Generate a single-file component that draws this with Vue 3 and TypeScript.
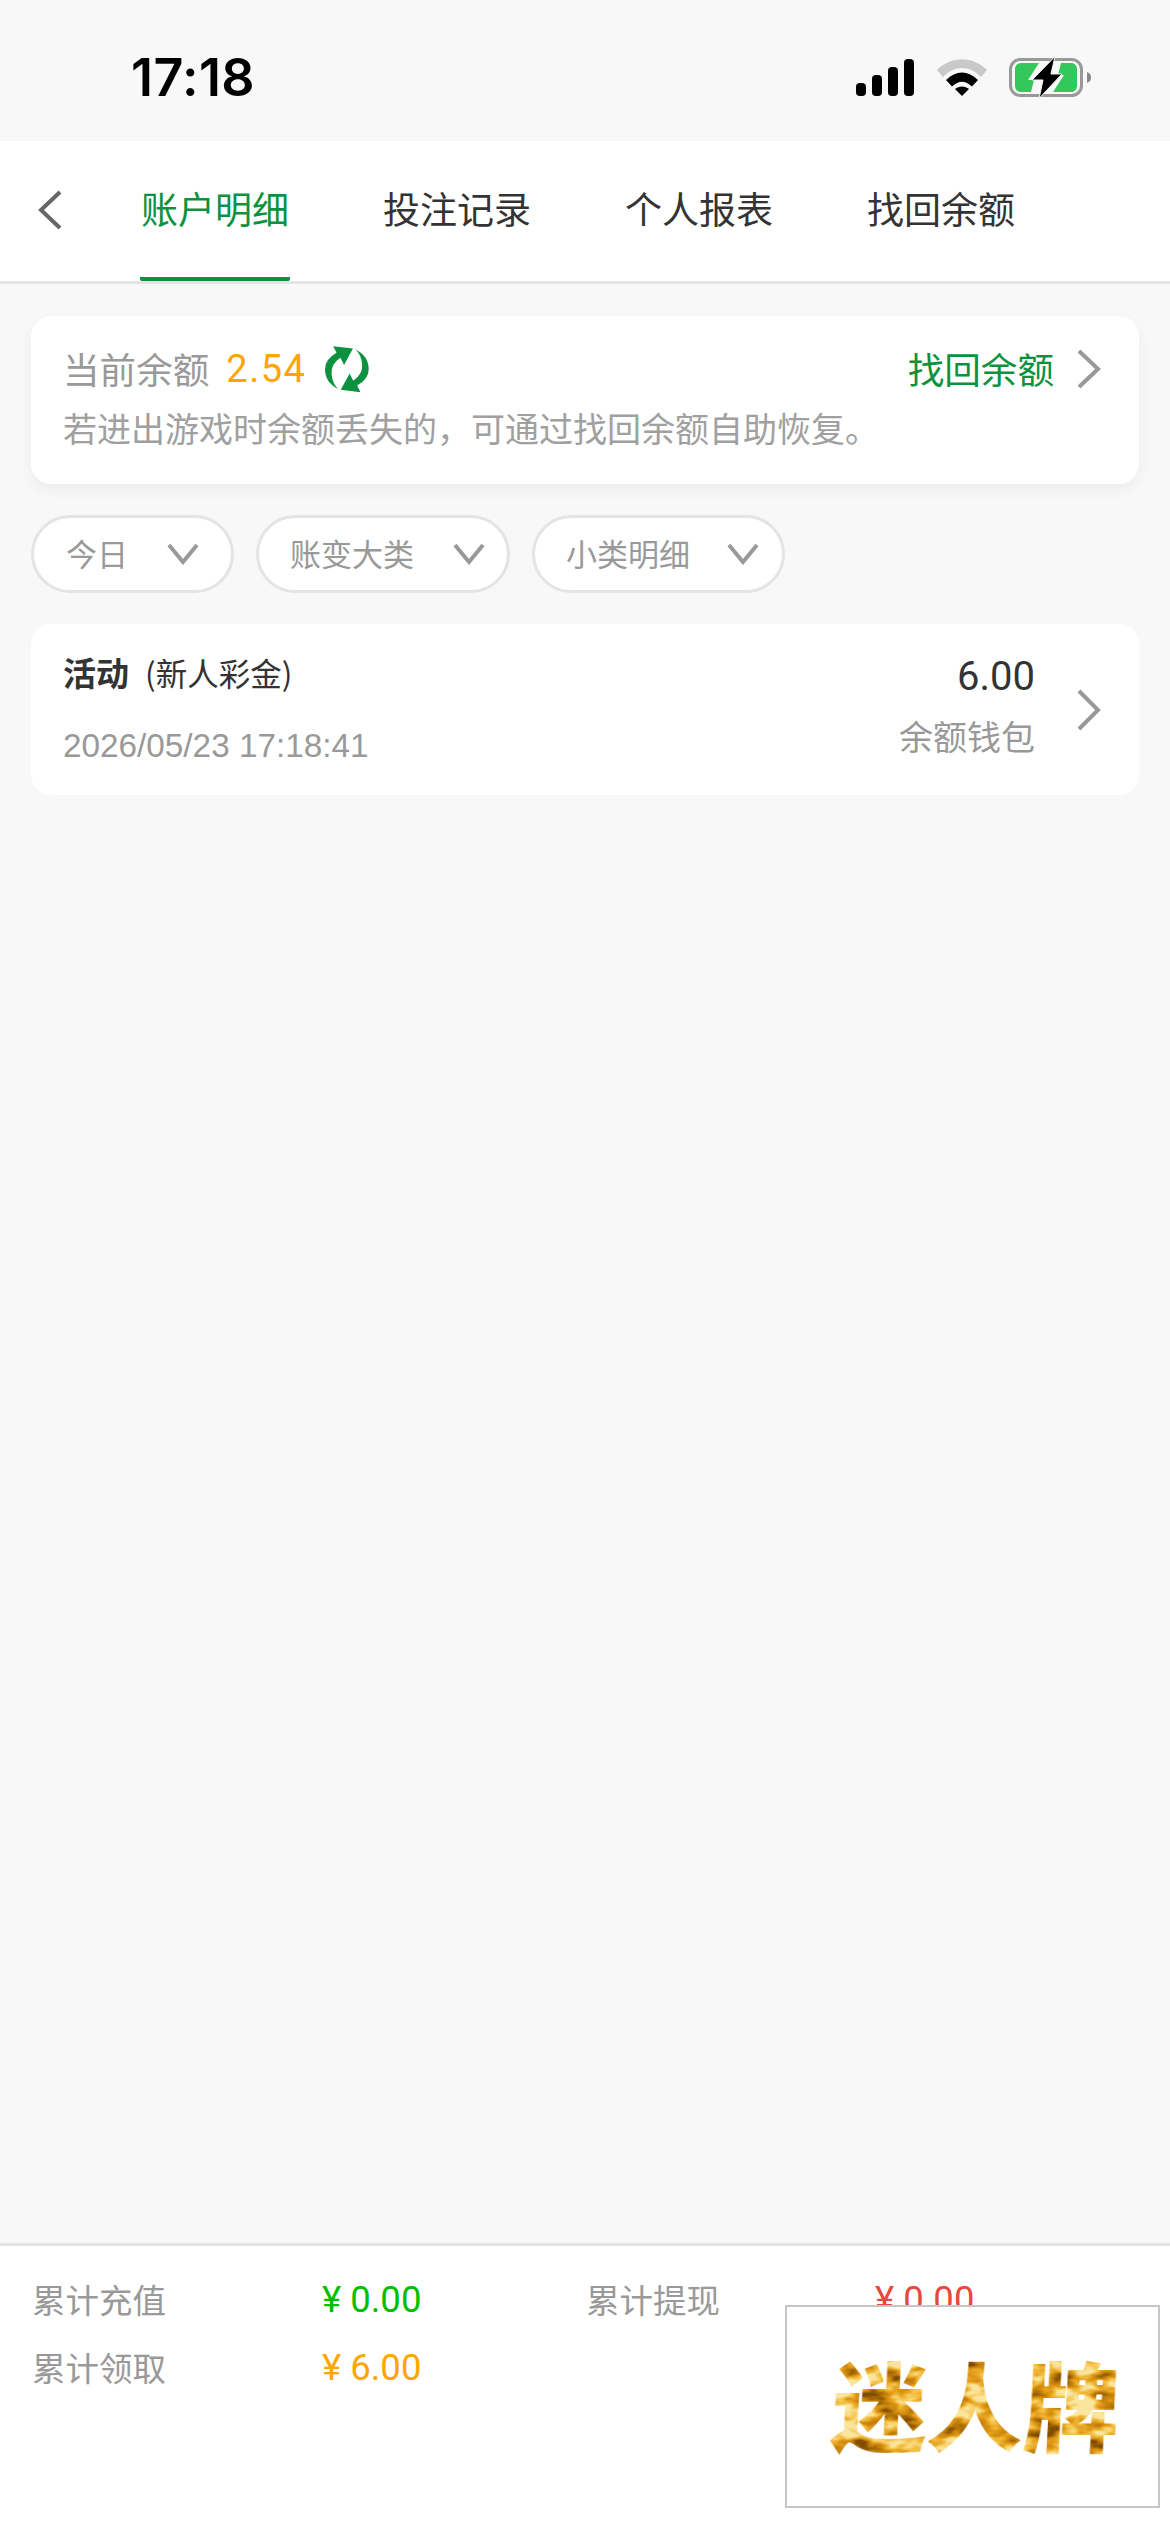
<script setup lang="ts">
const tabs: string[] = ['账户明细', '投注记录', '个人报表', '找回余额']
const filters: { label: string; cls: string }[] = [
  { label: '今日', cls: 'f1' },
  { label: '账变大类', cls: 'f2' },
  { label: '小类明细', cls: 'f3' },
]
</script>

<template>
  <div class="page">
    <header class="status">
      <span class="time">17:18</span>
      <div class="status-icons">
        <svg class="sig" viewBox="0 0 58 37" width="58" height="37">
          <rect x="0" y="24" width="10" height="13" rx="4" />
          <rect x="16" y="16" width="10" height="21" rx="4" />
          <rect x="32" y="8" width="10" height="29" rx="4" />
          <rect x="48" y="0" width="10" height="37" rx="4" />
        </svg>
        <svg class="wifi" viewBox="0 0 50 37" width="50" height="37">
          <path d="M0 11 C14 -3.500 36 -3.500 50 11 L44 18 C32 6 18 6 6 18 Z" fill="#c9c9c9" />
          <path d="M9 21 C19 11 31 11 41 21 L35 27.500 C28 21 22 21 15 27.500 Z" fill="#000" />
          <path d="M18 30 C22 26.500 28 26.500 32 30 L25 37 Z" fill="#000" />
        </svg>
        <svg class="bat" viewBox="0 0 82 43" width="82" height="43">
          <rect x="1.500" y="3.500" width="71" height="36" rx="10" fill="none" stroke="#999" stroke-width="3" />
          <path d="M78 16 C81 17 82 19 82 21.500 C82 24 81 26 78 27 Z" fill="#888" />
          <path d="M12 7 H30 L19 24 H25 L22 36 H12 C8.500 36 6 33.500 6 30 V13 C6 9.500 8.500 7 12 7 Z" fill="#34c759" />
          <path d="M52 7 H62 C65.500 7 68 9.500 68 13 V30 C68 33.500 65.500 36 62 36 H44 L55 19 H49 Z" fill="#34c759" />
          <path d="M46 0.500 L23 24 H34 L30 42.500 L53 18 H42 Z" fill="#000" stroke="#f8f8f8" stroke-width="1" />
        </svg>
      </div>
    </header>

    <nav class="nav">
      <svg class="back" viewBox="0 0 26 40" width="26" height="40">
        <path d="M23 2 L4 20 L23 38" fill="none" stroke="#666" stroke-width="4" />
      </svg>
      <div class="tabs">
        <div v-for="(t, i) in tabs" :key="t" class="tab" :class="{ active: i === 0 }">{{ t }}</div>
      </div>
    </nav>

    <main class="main">
      <section class="balance">
        <div class="bal-top">
          <span class="bal-label">当前余额</span>
          <span class="bal-num">2.54</span>
          <svg class="refresh" viewBox="72 47 140 145" width="46" height="48">
            <path d="M100 50 L160 57 L133 107 L122 85 Q92 105 95 135 Q98 165 115 180 Q75 160 75 120 Q75 90 110 70 Z" fill="#0c923e" />
            <path d="M100 50 L160 57 L133 107 L122 85 Q92 105 95 135 Q98 165 115 180 Q75 160 75 120 Q75 90 110 70 Z" fill="#0c923e" transform="rotate(180 141.500 120)" />
          </svg>
          <span class="recover">找回余额</span>
          <svg class="chev" viewBox="0 0 26 40" width="26" height="40">
            <path d="M3 2 L22 20 L3 38" fill="none" stroke="#999" stroke-width="4" />
          </svg>
        </div>
        <p class="bal-tip">若进出游戏时余额丢失的，可通过找回余额自助恢复。</p>
      </section>

      <div class="filters">
        <div v-for="f in filters" :key="f.label" class="pill" :class="f.cls">
          <span>{{ f.label }}</span>
          <svg viewBox="0 0 32 22" width="32" height="22">
            <path d="M2 2 L16 19 L30 2" fill="none" stroke="#999" stroke-width="4" />
          </svg>
        </div>
      </div>

      <section class="record">
        <div class="rec-left">
          <div class="rec-title"><b>活动</b><span>(新人彩金)</span></div>
          <div class="rec-date">2026/05/23 17:18:41</div>
        </div>
        <div class="rec-right">
          <div class="rec-amt">6.00</div>
          <div class="rec-wallet">余额钱包</div>
        </div>
        <svg class="chev" viewBox="0 0 26 42" width="26" height="42">
          <path d="M3 2 L22 21 L3 40" fill="none" stroke="#999" stroke-width="4" />
        </svg>
      </section>
    </main>

    <footer class="foot">
      <span class="lab">累计充值</span>
      <span class="val green">¥ 0.00</span>
      <span class="lab">累计提现</span>
      <span class="val red">¥ 0.00</span>
      <span class="lab">累计领取</span>
      <span class="val orange">¥ 6.00</span>
      <div class="promo">
        <svg class="defs" width="0" height="0" aria-hidden="true">
          <filter id="goldfoil" x="-5%" y="-5%" width="110%" height="110%" color-interpolation-filters="sRGB">
            <feTurbulence type="fractalNoise" baseFrequency="0.03 0.06" numOctaves="3" seed="7" result="n" />
            <feColorMatrix in="n" type="matrix" values="2.6 0 0 0 -0.7  2.6 0 0 0 -0.7  2.6 0 0 0 -0.7  0 0 0 0 1" />
            <feComponentTransfer result="c">
              <feFuncR type="table" tableValues="0.50 0.74 0.88 0.96 0.98" />
              <feFuncG type="table" tableValues="0.30 0.48 0.60 0.76 0.90" />
              <feFuncB type="table" tableValues="0.00 0.04 0.08 0.28 0.62" />
            </feComponentTransfer>
            <feComposite in="c" in2="SourceAlpha" operator="in" />
          </filter>
        </svg>
        <span class="gold">迷人牌</span>
      </div>
    </footer>
  </div>
</template>

<style>
html, body { margin: 0; background: #f8f8f8; }
</style>

<style scoped>
.page {
  width: 1170px;
  height: 2532px;
  display: flex;
  flex-direction: column;
  background: #f8f8f8;
  font-family: "Noto Sans CJK SC", "Noto Sans", sans-serif;
  overflow: hidden;
}
.status {
  height: 141px;
  flex: none;
  display: flex;
  align-items: center;
  justify-content: space-between;
  padding: 0 79px 0 131px;
  box-sizing: border-box;
}
.time {
  font: 600 52px/1 Inter, "Liberation Sans", sans-serif;
  color: #000;
  letter-spacing: 0.400px;
  position: relative;
  top: 7px;
}
.status-icons { display: flex; align-items: center; margin-top: 14px; }
.sig { display: block; margin-right: 23px; }
.wifi { display: block; margin-right: 22px; }
.bat { display: block; }
.nav {
  height: 143px;
  flex: none;
  box-sizing: border-box;
  background: #fff;
  border-bottom: 3px solid #e4e4e4;
  display: flex;
  align-items: stretch;
  padding-left: 37px;
}
.back { align-self: center; margin-top: -3px; }
.tabs { display: flex; gap: 92px; margin-left: 77px; }
.tab {
  width: 150px;
  display: flex;
  align-items: center;
  justify-content: center;
  font-size: 37px;
  font-weight: 400;
  color: #333;
  box-sizing: border-box;
  border-bottom: 4px solid transparent;
  padding-bottom: 3px;
  white-space: nowrap;
}
.tab.active { color: #0c923e; border-bottom-color: #0c923e; border-radius: 0 0 2px 2px; }
.main {
  flex: 1;
  padding: 32px 31px 0;
  display: flex;
  flex-direction: column;
}
.balance {
  height: 168px;
  box-sizing: border-box;
  background: #fff;
  border-radius: 20px;
  box-shadow: 0 6px 14px rgba(0, 0, 0, 0.05);
  padding: 28px 37px 0 32px;
}
.bal-top { display: flex; align-items: center; height: 50px; }
.bal-label { font-size: 36.600px; color: #999; line-height: 50px; }
.bal-num {
  font: 400 38px/50px Roboto, sans-serif;
  color: #ffa500;
  letter-spacing: 1.500px;
  margin-left: 17px;
}
.refresh { margin-left: 18px; }
.recover { margin-left: auto; font-size: 36.600px; color: #0c923e; line-height: 50px; }
.chev { display: block; }
.bal-top .chev { margin-left: 22px; }
.bal-tip {
  margin: 9px 0 0;
  font-size: 34px;
  line-height: 50px;
  color: #a0a0a0;
  white-space: nowrap;
}
.filters { display: flex; gap: 22px; margin-top: 31px; }
.pill {
  height: 78px;
  box-sizing: border-box;
  border: 3px solid #e4e4e4;
  border-radius: 39px;
  background: #fff;
  display: flex;
  align-items: center;
  justify-content: space-between;
  color: #999;
  font-size: 31px;
  white-space: nowrap;
}
.pill span { position: relative; top: -2px; }
.pill svg { display: block; }
.f1 { width: 203px; padding: 0 32px 0 32px; }
.f2 { width: 254px; padding: 0 22px 0 31px; }
.f3 { width: 253px; padding: 0 23px 0 31px; }
.record {
  margin-top: 31px;
  height: 171px;
  box-sizing: border-box;
  background: #fff;
  border-radius: 20px;
  display: flex;
  align-items: center;
  padding: 0 37px 0 32px;
}
.rec-left { flex: 1; }
.rec-title { display: flex; align-items: center; height: 50px; color: #333; margin-top: -6px; }
.rec-title b { font-size: 33px; font-weight: 700; }
.rec-title span { font-size: 31.500px; margin-left: 16px; }
.rec-date {
  margin-top: 29px;
  font: 400 33.300px/40px "Liberation Sans", sans-serif;
  color: #999;
}
.rec-right { text-align: right; margin-right: 41px; }
.rec-amt { font: 400 40px/50px Roboto, sans-serif; color: #333; margin-top: -6px; }
.rec-wallet { font-size: 34px; line-height: 50px; color: #999; margin-top: 9px; }
.foot {
  position: relative;
  height: 289px;
  flex: none;
  box-sizing: border-box;
  background: #fff;
  border-top: 3px solid #e4e4e4;
  padding: 18px 0 0 32px;
  display: grid;
  grid-template-columns: 290px 264px 289px 1fr;
  grid-auto-rows: 68px;
  align-items: center;
  align-content: start;
}
.lab { font-size: 33.500px; color: #999; white-space: nowrap; }
.val {
  font: 400 36.500px/1 Roboto, "Noto Sans CJK SC", sans-serif;
  white-space: nowrap;
  padding-top: 5px;
}
.green { color: #00bf00; }
.red { color: #e9473b; }
.orange { color: #ffa500; }
.promo {
  position: absolute;
  left: 785px;
  top: 59px;
  width: 375px;
  height: 203px;
  box-sizing: border-box;
  background: #fff;
  border: 2px solid #c6c6c6;
  display: flex;
  align-items: center;
  justify-content: center;
}
.defs { position: absolute; }
.gold {
  font-size: 96px;
  line-height: 1;
  font-weight: 900;
  white-space: nowrap;
  transform: translate(3px, -4px) skewX(-3deg);
  color: #000;
  filter: url(#goldfoil);
}
</style>
